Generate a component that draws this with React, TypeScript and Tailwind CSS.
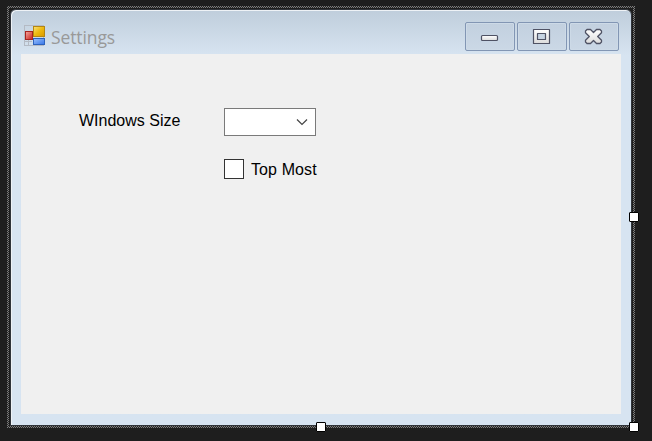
import type { ReactNode } from "react";

function Handle({ className }: { className: string }) {
  return <span className={`absolute size-[10px] rounded-[1px] border border-black bg-white ${className}`} />;
}

function CaptionButton({ label, children }: { label: string; children: ReactNode }) {
  return (
    <button
      aria-label={label}
      className="flex h-[29px] w-[50px] items-center justify-center rounded-[2px] border border-[#8296b4] bg-linear-to-b from-[#c2d0df] to-[#cbd8e6] shadow-[inset_0_0_0_1px_#cddae7]"
    >
      <svg width="20" height="17" viewBox="0 0 20 17">
        <defs>
          <linearGradient id="glyph" x1="0" y1="0" x2="0" y2="1">
            <stop offset="0" stopColor="#fff" />
            <stop offset="1" stopColor="#dcdcdc" />
          </linearGradient>
        </defs>
        {children}
      </svg>
    </button>
  );
}

function FormIcon() {
  return (
    <svg width="21" height="21" viewBox="0 0 21 21" shapeRendering="crispEdges">
      <defs>
        <linearGradient id="gold" x1="0" y1="0" x2="1" y2="1">
          <stop offset="0" stopColor="#f9e27a" />
          <stop offset=".5" stopColor="#eeb90f" />
          <stop offset="1" stopColor="#d99800" />
        </linearGradient>
        <linearGradient id="red" x1="0" y1="0" x2="1" y2="1">
          <stop offset="0" stopColor="#f5a9a0" />
          <stop offset="1" stopColor="#c81e1a" />
        </linearGradient>
        <linearGradient id="blue" x1="0" y1="0" x2="1" y2="1">
          <stop offset="0" stopColor="#9cc2fc" />
          <stop offset="1" stopColor="#3574e8" />
        </linearGradient>
      </defs>
      <path d="M.5.5h19v20H.5zM4.5 14v6M0 16.5h8" fill="none" stroke="#b4bac4" />
      <rect x="9.5" y="1.5" width="11" height="10" fill="url(#gold)" stroke="#b48612" />
      <rect x="1.5" y="6.5" width="7" height="8" fill="url(#red)" stroke="#a9241f" />
      <rect x="9.5" y="13.5" width="11" height="6" fill="url(#blue)" stroke="#2d62bd" />
    </svg>
  );
}

function TitleBar() {
  return (
    <header className="flex h-11 shrink-0 items-start pl-[13px] pr-3">
      <div className="mt-[15px]">
        <FormIcon />
      </div>
      <h1 className="ml-[6px] mt-[15px] font-['Open_Sans',sans-serif] text-[17.5px] leading-6 tracking-[-0.1px] text-[#999]">
        Settings
      </h1>
      <div className="ml-auto mt-3 flex gap-[2px]">
        <CaptionButton label="Minimize">
          <rect x="1.5" y="7.5" width="16" height="5" rx="1" fill="url(#glyph)" stroke="#4f5264" strokeWidth="1.2" />
        </CaptionButton>
        <CaptionButton label="Maximize">
          <path
            d="M1.5 1.5h16v14h-16zM5.5 5.5v6h8v-6z"
            fill="url(#glyph)"
            fillRule="evenodd"
            stroke="#4f5264"
            strokeWidth="1.2"
            strokeLinejoin="round"
          />
        </CaptionButton>
        <CaptionButton label="Close">
          <path
            d="M3 1.5h3.5l3 3 3-3H16l1.5 1.5v1.8L13.7 8.5l3.8 3.7V14L16 15.5h-3.5l-3-3-3 3H3L1.5 14v-1.8l3.8-3.7-3.8-3.7V3z"
            fill="url(#glyph)"
            stroke="#4f5264"
            strokeWidth="1.3"
            strokeLinejoin="round"
          />
        </CaptionButton>
      </div>
    </header>
  );
}

export default function App() {
  return (
    <main className="h-[441px] w-[652px] overflow-hidden bg-[#1e1e1e] pl-[7px] pt-[6px] font-['Liberation_Sans',Arial,sans-serif] text-base text-black">
      <div className="relative h-[422px] w-[628px] bg-[repeating-conic-gradient(#7c7c7c_0_25%,#252525_0_50%)] bg-size-[2px_2px] p-[2px]">
        <div className="h-full bg-[#1e1e1e] pl-px pt-px">
          <div className="flex h-[417px] w-[622px] flex-col rounded-t-[6px] border border-[#30343a] bg-[#d7e4f1] bg-linear-to-b from-[#bfcddb] from-0% to-[#d7e4f1] to-[45px] shadow-[inset_1px_1px_0_#eef2f6]">
            <TitleBar />
            <section className="mx-[10px] h-[360px] bg-[#f0f0f0] pl-[58px] pt-[54px]">
              <div className="flex h-7">
                <label className="w-[145px] pt-[1px] leading-6">WIndows Size</label>
                <div className="flex h-7 w-[92px] items-center justify-end border border-[#7a7a7a] bg-white pr-[7px]">
                  <svg width="12" height="8" viewBox="0 0 12 8">
                    <path d="M1 1.5l5 5 5-5" fill="none" stroke="#444" strokeWidth="1.2" />
                  </svg>
                </div>
              </div>
              <label className="ml-[145px] mt-[23px] flex h-5 items-center">
                <span className="size-5 border border-[#333] bg-white" />
                <span className="ml-[7px] pt-[2px] tracking-[0.1px]">Top Most</span>
              </label>
            </section>
          </div>
        </div>
        <Handle className="left-[309px] top-[416px]" />
        <Handle className="left-[622px] top-[416px]" />
        <Handle className="left-[622px] top-[206px]" />
      </div>
    </main>
  );
}
